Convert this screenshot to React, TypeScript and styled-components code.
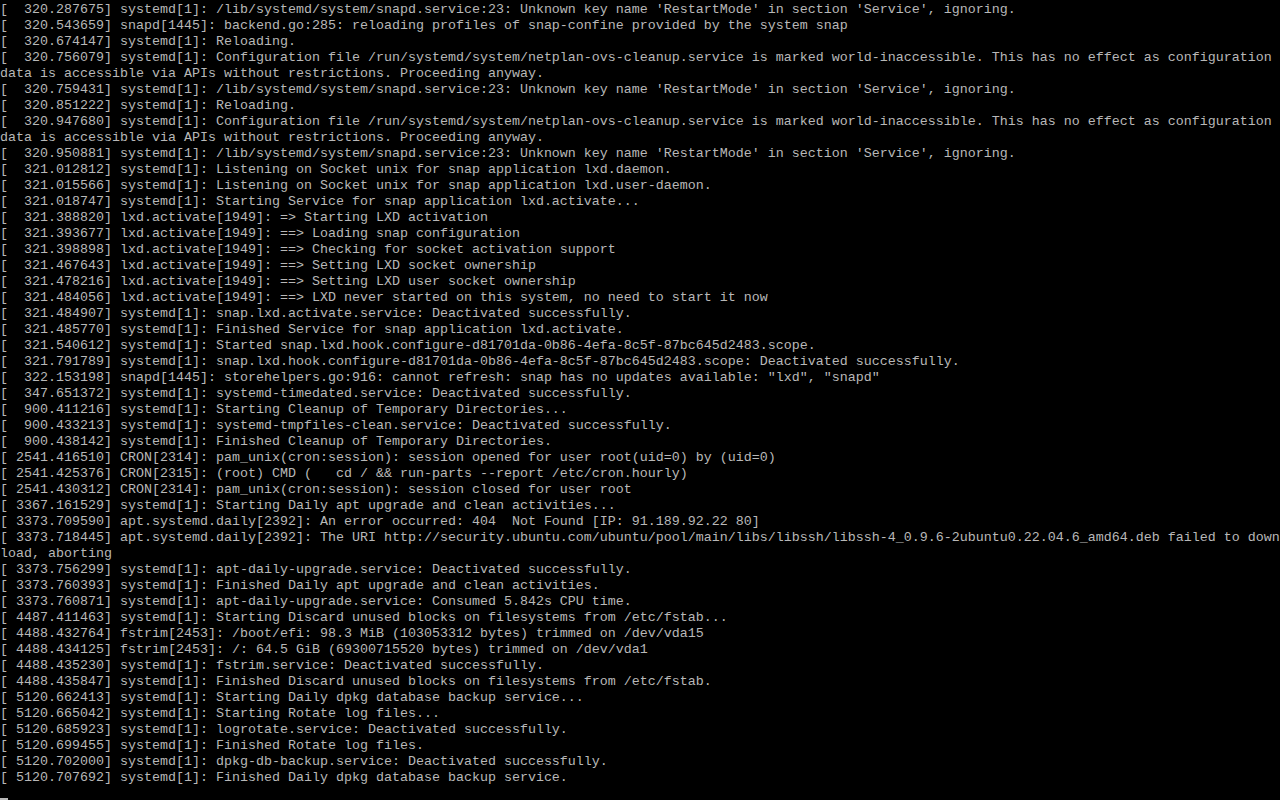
import React from "react";
import styled, { createGlobalStyle } from "styled-components";

const Global = createGlobalStyle`
  html, body {
    margin: 0;
    padding: 0;
    background: #000000;
    overflow: hidden;
  }
`;

const Screen = styled.div`
  width: 1280px;
  height: 800px;
  background: #000000;
  color: #b8b8b8;
  font-family: "Liberation Mono", "DejaVu Sans Mono", monospace;
  font-size: 13.3333px;
  display: flex;
  flex-direction: column;
  overflow: hidden;
`;

const Line = styled.div`
  height: 16px;
  flex: 0 0 16px;
  box-sizing: border-box;
  white-space: pre;
  display: flex;
  align-items: flex-end;
`;

const TextLine = styled(Line)`
  align-items: flex-start;
  padding-top: 2px;
  line-height: 16px;
`;

const Cursor = styled.div`
  width: 8px;
  height: 2px;
  background: #b8b8b8;
`;

const lines: string[] = [
  "[  320.287675] systemd[1]: /lib/systemd/system/snapd.service:23: Unknown key name 'RestartMode' in section 'Service', ignoring.",
  "[  320.543659] snapd[1445]: backend.go:285: reloading profiles of snap-confine provided by the system snap",
  "[  320.674147] systemd[1]: Reloading.",
  "[  320.756079] systemd[1]: Configuration file /run/systemd/system/netplan-ovs-cleanup.service is marked world-inaccessible. This has no effect as configuration",
  "data is accessible via APIs without restrictions. Proceeding anyway.",
  "[  320.759431] systemd[1]: /lib/systemd/system/snapd.service:23: Unknown key name 'RestartMode' in section 'Service', ignoring.",
  "[  320.851222] systemd[1]: Reloading.",
  "[  320.947680] systemd[1]: Configuration file /run/systemd/system/netplan-ovs-cleanup.service is marked world-inaccessible. This has no effect as configuration",
  "data is accessible via APIs without restrictions. Proceeding anyway.",
  "[  320.950881] systemd[1]: /lib/systemd/system/snapd.service:23: Unknown key name 'RestartMode' in section 'Service', ignoring.",
  "[  321.012812] systemd[1]: Listening on Socket unix for snap application lxd.daemon.",
  "[  321.015566] systemd[1]: Listening on Socket unix for snap application lxd.user-daemon.",
  "[  321.018747] systemd[1]: Starting Service for snap application lxd.activate...",
  "[  321.388820] lxd.activate[1949]: => Starting LXD activation",
  "[  321.393677] lxd.activate[1949]: ==> Loading snap configuration",
  "[  321.398898] lxd.activate[1949]: ==> Checking for socket activation support",
  "[  321.467643] lxd.activate[1949]: ==> Setting LXD socket ownership",
  "[  321.478216] lxd.activate[1949]: ==> Setting LXD user socket ownership",
  "[  321.484056] lxd.activate[1949]: ==> LXD never started on this system, no need to start it now",
  "[  321.484907] systemd[1]: snap.lxd.activate.service: Deactivated successfully.",
  "[  321.485770] systemd[1]: Finished Service for snap application lxd.activate.",
  "[  321.540612] systemd[1]: Started snap.lxd.hook.configure-d81701da-0b86-4efa-8c5f-87bc645d2483.scope.",
  "[  321.791789] systemd[1]: snap.lxd.hook.configure-d81701da-0b86-4efa-8c5f-87bc645d2483.scope: Deactivated successfully.",
  "[  322.153198] snapd[1445]: storehelpers.go:916: cannot refresh: snap has no updates available: \"lxd\", \"snapd\"",
  "[  347.651372] systemd[1]: systemd-timedated.service: Deactivated successfully.",
  "[  900.411216] systemd[1]: Starting Cleanup of Temporary Directories...",
  "[  900.433213] systemd[1]: systemd-tmpfiles-clean.service: Deactivated successfully.",
  "[  900.438142] systemd[1]: Finished Cleanup of Temporary Directories.",
  "[ 2541.416510] CRON[2314]: pam_unix(cron:session): session opened for user root(uid=0) by (uid=0)",
  "[ 2541.425376] CRON[2315]: (root) CMD (   cd / && run-parts --report /etc/cron.hourly)",
  "[ 2541.430312] CRON[2314]: pam_unix(cron:session): session closed for user root",
  "[ 3367.161529] systemd[1]: Starting Daily apt upgrade and clean activities...",
  "[ 3373.709590] apt.systemd.daily[2392]: An error occurred: 404  Not Found [IP: 91.189.92.22 80]",
  "[ 3373.718445] apt.systemd.daily[2392]: The URI http://security.ubuntu.com/ubuntu/pool/main/libs/libssh/libssh-4_0.9.6-2ubuntu0.22.04.6_amd64.deb failed to down",
  "load, aborting",
  "[ 3373.756299] systemd[1]: apt-daily-upgrade.service: Deactivated successfully.",
  "[ 3373.760393] systemd[1]: Finished Daily apt upgrade and clean activities.",
  "[ 3373.760871] systemd[1]: apt-daily-upgrade.service: Consumed 5.842s CPU time.",
  "[ 4487.411463] systemd[1]: Starting Discard unused blocks on filesystems from /etc/fstab...",
  "[ 4488.432764] fstrim[2453]: /boot/efi: 98.3 MiB (103053312 bytes) trimmed on /dev/vda15",
  "[ 4488.434125] fstrim[2453]: /: 64.5 GiB (69300715520 bytes) trimmed on /dev/vda1",
  "[ 4488.435230] systemd[1]: fstrim.service: Deactivated successfully.",
  "[ 4488.435847] systemd[1]: Finished Discard unused blocks on filesystems from /etc/fstab.",
  "[ 5120.662413] systemd[1]: Starting Daily dpkg database backup service...",
  "[ 5120.665042] systemd[1]: Starting Rotate log files...",
  "[ 5120.685923] systemd[1]: logrotate.service: Deactivated successfully.",
  "[ 5120.699455] systemd[1]: Finished Rotate log files.",
  "[ 5120.702000] systemd[1]: dpkg-db-backup.service: Deactivated successfully.",
  "[ 5120.707692] systemd[1]: Finished Daily dpkg database backup service.",
];

export default function App() {
  return (
    <>
      <Global />
      <Screen>
        {lines.map((l, i) => (
          <TextLine key={i}>{l}</TextLine>
        ))}
        <Line>
          <Cursor />
        </Line>
      </Screen>
    </>
  );
}
